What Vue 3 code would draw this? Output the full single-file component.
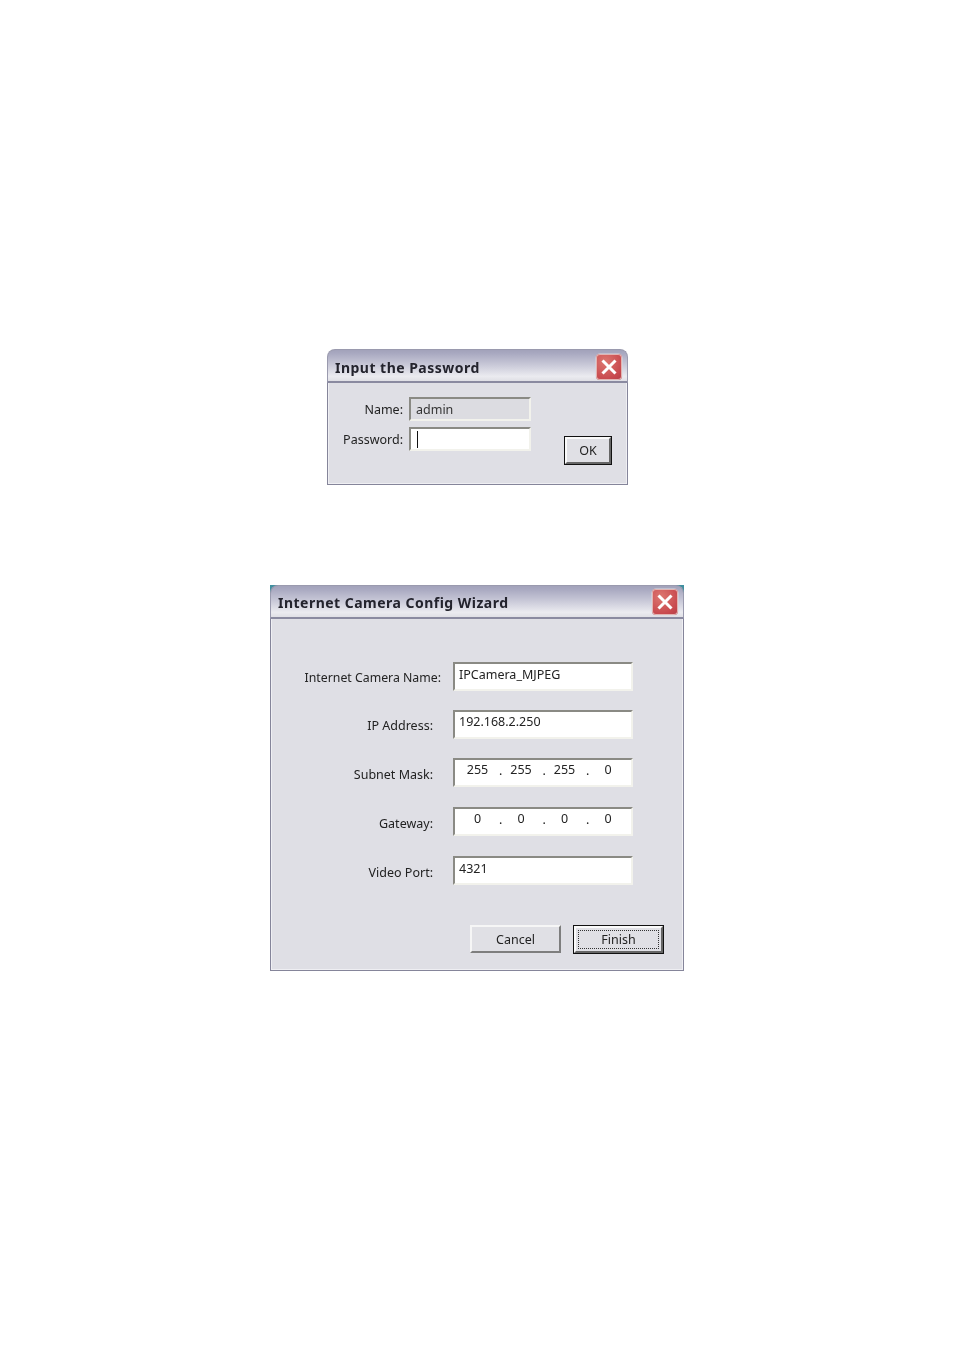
<script setup>
const fields = [
  { label: 'Internet Camera Name:', value: 'IPCamera_MJPEG', cls: 'r-name' },
  { label: 'IP Address:', value: '192.168.2.250', cls: 'r-ip' },
  { label: 'Subnet Mask:', octets: ['255', '255', '255', '0'], cls: 'r-mask' },
  { label: 'Gateway:', octets: ['0', '0', '0', '0'], cls: 'r-gw' },
  { label: 'Video Port:', value: '4321', cls: 'r-port' },
]
</script>

<template>
  <div class="page">
    <section class="win win-pass">
      <header class="title">
        <h1>Input the Password</h1>
        <span class="close"><svg viewBox="0 0 26 26" width="26" height="26"><path d="M6.5 6.5 19.5 19.5M19.5 6.5 6.5 19.5" stroke="#fff" stroke-width="3" fill="none"/></svg></span>
      </header>
      <div class="body body-pass">
        <div class="pass-rows">
          <div class="pass-row">
            <label>Name:</label>
            <div class="field disabled">admin</div>
          </div>
          <div class="pass-row">
            <label>Password:</label>
            <div class="field"><i class="caret"></i></div>
          </div>
        </div>
        <button class="btn default ok">OK</button>
      </div>
    </section>

    <section class="win win-cam">
      <header class="title">
        <h1>Internet Camera Config Wizard</h1>
        <span class="close"><svg viewBox="0 0 26 26" width="26" height="26"><path d="M6.5 6.5 19.5 19.5M19.5 6.5 6.5 19.5" stroke="#fff" stroke-width="3" fill="none"/></svg></span>
      </header>
      <div class="body body-cam">
        <div v-for="f in fields" :key="f.label" class="cam-row" :class="f.cls">
          <label>{{ f.label }}</label>
          <div class="field tall">
            <template v-if="f.value">{{ f.value }}</template>
            <div v-else class="octets">
              <template v-for="(o, i) in f.octets" :key="i">
                <span class="oct">{{ o }}</span>
                <span v-if="i < 3" class="dot">.</span>
              </template>
            </div>
          </div>
        </div>
        <div class="actions">
          <button class="btn cancel">Cancel</button>
          <button class="btn default finish"><span class="focus">Finish</span></button>
        </div>
      </div>
    </section>
  </div>
</template>

<style>
html, body { margin: 0; background: #fff; }
</style>

<style scoped>
.page {
  width: 954px;
  height: 1351px;
  box-sizing: border-box;
  padding-top: 349px;
  background: #fff;
  font-family: "Noto Sans", sans-serif;
  font-size: 12.5px;
  color: #222;
  overflow: hidden;
}
.win {
  box-sizing: border-box;
  filter: blur(0.4px);
}
.win-pass { width: 301px; height: 136px; margin-left: 327px; }
.win-cam {
  width: 414px;
  height: 386px;
  margin-left: 270px;
  margin-top: 100px;
  background: linear-gradient(#3f8f9f 0 8px, transparent 8px);
}
.title {
  display: flex;
  align-items: center;
  justify-content: space-between;
  box-sizing: border-box;
  height: 34px;
  padding: 3px 5px 0 7px;
  background: linear-gradient(#a2a2ba 0, #a8a8c0 10%, #c6c6d6 45%, #ebebf0 85%, #dfdfe5 100%);
  border: 1px solid #9a9aae;
  border-bottom: 2px solid #8a8aa0;
  border-radius: 8px 8px 0 0;
}
.win-cam .title { padding-top: 1px; }
.title h1 {
  margin: 0;
  font-size: 14px;
  font-weight: 700;
  letter-spacing: 0.48px;
  color: #23232d;
}
.close {
  display: block;
  width: 26px;
  height: 26px;
  box-sizing: border-box;
  border-radius: 4px;
  background: radial-gradient(circle at 35% 30%, #dd7770, #c8494e 70%, #b23d48);
  box-shadow: inset 0 0 0 1px #e2b4b2, 0 0 0 0.5px #d8d8e0;
}
.close svg { display: block; }
.body {
  box-sizing: border-box;
  background: #dfdfe5;
  border: 1px solid #85859a;
  border-top: 0;
  box-shadow: inset 1px 0 0 #efeff3, inset -1px 0 0 #efeff3, inset 0 -1px 0 #efeff3;
}
.body-pass {
  display: flex;
  align-items: flex-start;
  height: 102px;
  padding-top: 14px;
}
.pass-rows { display: flex; flex-direction: column; gap: 6px; width: 203px; }
.pass-row { display: flex; align-items: center; }
.pass-row label { width: 75px; text-align: right; margin-right: 6px; }
.field {
  box-sizing: border-box;
  width: 122px;
  height: 24px;
  padding: 2px 0 0 5px;
  background: #fff;
  border: 2px solid;
  border-color: #8a8a84 #f2f2ec #f2f2ec #8a8a84;
  line-height: 17px;
  white-space: nowrap;
}
.field.disabled { background: #dcdce1; color: #333; }
.caret { display: block; width: 1px; height: 17px; background: #111; margin-left: 1px; }
.btn {
  box-sizing: border-box;
  padding: 0;
  font: inherit;
  color: #222;
  background: #e0e0e5;
  border: 2px solid;
  border-color: #f6f6f6 #7e7e7e #7e7e7e #f6f6f6;
}
.btn.default {
  outline: 1px solid #111;
  outline-offset: 0;
  border-color: #fafafa #666 #666 #fafafa;
}
.ok { width: 46px; height: 27px; margin: 40px 0 0 34px; line-height: 20px; }
.body-cam {
  height: 352px;
  padding: 43px 0 0 2px;
  display: flex;
  flex-direction: column;
}
.cam-row { display: flex; align-items: center; height: 29px; }
.cam-row label {
  width: 160px;
  margin-right: 20px;
  text-align: right;
  margin-top: 1px;
}
.cam-row .field {
  width: 180px;
  height: 29px;
  padding-left: 4px;
  line-height: 18px;
}
.r-name label { width: 168px; margin-right: 12px; font-size: 12.3px; }
.r-ip { margin-top: 19px; }
.r-ip .field { padding-top: 1px; }
.r-mask { margin-top: 19px; }
.r-gw { margin-top: 20px; }
.r-port { margin-top: 20px; }
.r-mask label, .r-port label, .r-gw label { margin-top: 3px; }
.octets { display: flex; margin: -1px 0 0 0; }
.oct { width: 37px; text-align: center; }
.dot { box-sizing: border-box; width: 6.5px; padding-left: 3px; text-align: center; margin-top: 1px; }
.actions {
  display: flex;
  justify-content: flex-end;
  align-items: flex-start;
  gap: 13px;
  margin-top: 40px;
  padding-right: 20px;
}
.cancel { width: 91px; height: 28px; }
.finish { width: 89px; height: 27px; margin-top: 1px; padding: 2px; }
.focus {
  display: block;
  height: 100%;
  box-sizing: border-box;
  border: 1px dotted #333;
  line-height: 18px;
}
</style>
